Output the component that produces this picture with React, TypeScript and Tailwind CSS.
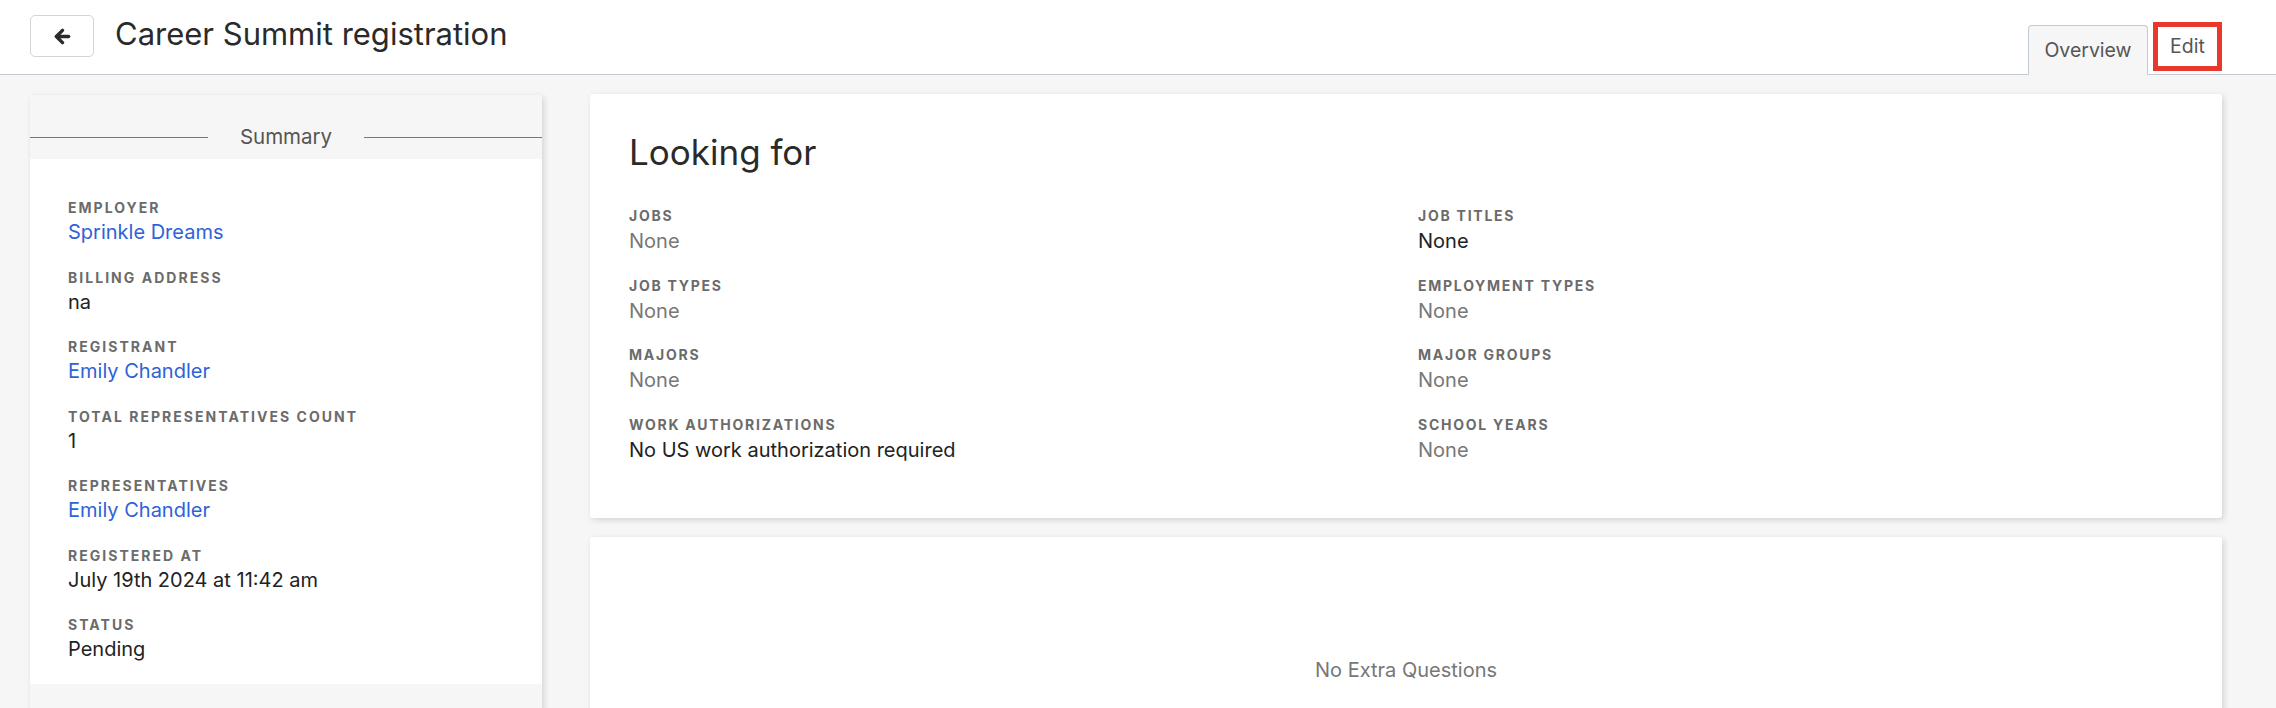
type Field = {
    label: string;
    value: string;
    tone?: "link" | "dark" | "muted";
};

// Summary panel rows
const summary: Field[] = [
    { label: "Employer", value: "Sprinkle Dreams", tone: "link" },
    { label: "Billing Address", value: "na" },
    { label: "Registrant", value: "Emily Chandler", tone: "link" },
    { label: "Total Representatives Count", value: "1" },
    { label: "Representatives", value: "Emily Chandler", tone: "link" },
    { label: "Registered At", value: "July 19th 2024 at 11:42 am" },
    { label: "Status", value: "Pending" },
];

// "Looking for" grid, row by row (left, right)
const lookingFor: Field[] = [
    { label: "Jobs", value: "None", tone: "muted" },
    { label: "Job Titles", value: "None", tone: "dark" },
    { label: "Job Types", value: "None", tone: "muted" },
    { label: "Employment Types", value: "None", tone: "muted" },
    { label: "Majors", value: "None", tone: "muted" },
    { label: "Major Groups", value: "None", tone: "muted" },
    { label: "Work Authorizations", value: "No US work authorization required", tone: "dark" },
    { label: "School Years", value: "None", tone: "muted" },
];

const toneClass = {
    link: "text-[#2e62d9]",
    dark: "text-[#222222]",
    muted: "text-[#777777]",
};

// Chunky back arrow
function BackArrow() {
    return (
        <svg viewBox="0 0 18 18" className="w-[17px] h-[17px]" fill="none" stroke="currentColor" strokeWidth={3.6} strokeLinecap="round" strokeLinejoin="round">
            <path d="M3 9h12.5" />
            <path d="M9 2.5 2.5 9 9 15.5" />
        </svg>
    );
}

function App() {
    return (
        <div className="min-h-screen bg-[#f6f6f6] font-['Inter',sans-serif]">
            {/* Top bar */}
            <header className="flex justify-between bg-white border-b border-[#c5cbd3] h-[75px] pl-[30px] pr-[54px]">
                <div className="flex items-start pt-[15px] gap-[21px]">
                    <button className="flex items-center justify-center w-[64px] h-[42px] rounded-[5px] border border-[#d4d4d4] bg-white text-[#2b2b2b]">
                        <BackArrow />
                    </button>
                    <h1 className="text-[31px] leading-[38px] text-[#2a2a2a]">Career Summit registration</h1>
                </div>
                <nav className="flex items-end gap-[5px] -mb-px">
                    <div className="flex items-center justify-center w-[120px] h-[50px] rounded-t-[4px] border border-b-0 border-[#c5cbd3] bg-[#f6f6f6] text-[19.5px] text-[#555]">
                        Overview
                    </div>
                    <div className="flex items-center justify-center w-[69px] h-[49px] mb-[4px] border-[5px] border-[#e8382b] text-[19.5px] text-[#555]">
                        Edit
                    </div>
                </nav>
            </header>

            <main className="flex items-start gap-[48px] pl-[30px] pr-[54px] pt-[20px]">
                {/* Summary card */}
                <aside className="w-[512px] shrink-0 bg-[#f6f6f6] rounded-[3px] shadow-[2px_2px_6px_rgba(0,0,0,0.14)]">
                    <div className="h-[64px] pt-[30px]">
                        <div className="flex items-center h-[24px]">
                            <div className="flex-1 h-px bg-[#777]" />
                            <span className="px-8 text-[20.5px] text-[#555]">Summary</span>
                            <div className="flex-1 h-px bg-[#777]" />
                        </div>
                    </div>
                    <div className="flex flex-col gap-[21.5px] bg-white px-[38px] pt-[39px] pb-[21px]">
                        {summary.map((f) => (
                            <div key={f.label}>
                                <div className="text-[14px] leading-[20px] font-bold uppercase tracking-[0.145em] text-[#6b6b6b]">{f.label}</div>
                                <div className={`text-[20px] leading-[28px] ${toneClass[f.tone ?? "dark"]}`}>{f.value}</div>
                            </div>
                        ))}
                    </div>
                    <div className="h-[40px]" />
                </aside>

                <section className="flex-1 flex flex-col gap-[19px] -mt-px">
                    {/* Looking for card */}
                    <div className="bg-white rounded-[3px] shadow-[2px_2px_6px_rgba(0,0,0,0.14)] px-[39px] pt-[37px] pb-[54px]">
                        <h2 className="text-[35px] leading-[42px] text-[#2a2a2a]">Looking for</h2>
                        <div className="grid grid-cols-2 gap-x-6 gap-y-[20.5px] mt-[33px]">
                            {lookingFor.map((f) => (
                                <div key={f.label}>
                                    <div className="text-[14px] leading-[20px] font-bold uppercase tracking-[0.125em] text-[#6b6b6b]">{f.label}</div>
                                    <div className={`mt-px text-[20px] leading-[28px] ${toneClass[f.tone ?? "dark"]}`}>{f.value}</div>
                                </div>
                            ))}
                        </div>
                    </div>

                    {/* Extra questions card */}
                    <div className="bg-white rounded-[3px] shadow-[2px_2px_6px_rgba(0,0,0,0.14)] pt-[119px] pb-[119px] text-center">
                        <p className="text-[20px] leading-[28px] text-[#777]">No Extra Questions</p>
                    </div>
                </section>
            </main>
        </div>
    );
}

export default App;
